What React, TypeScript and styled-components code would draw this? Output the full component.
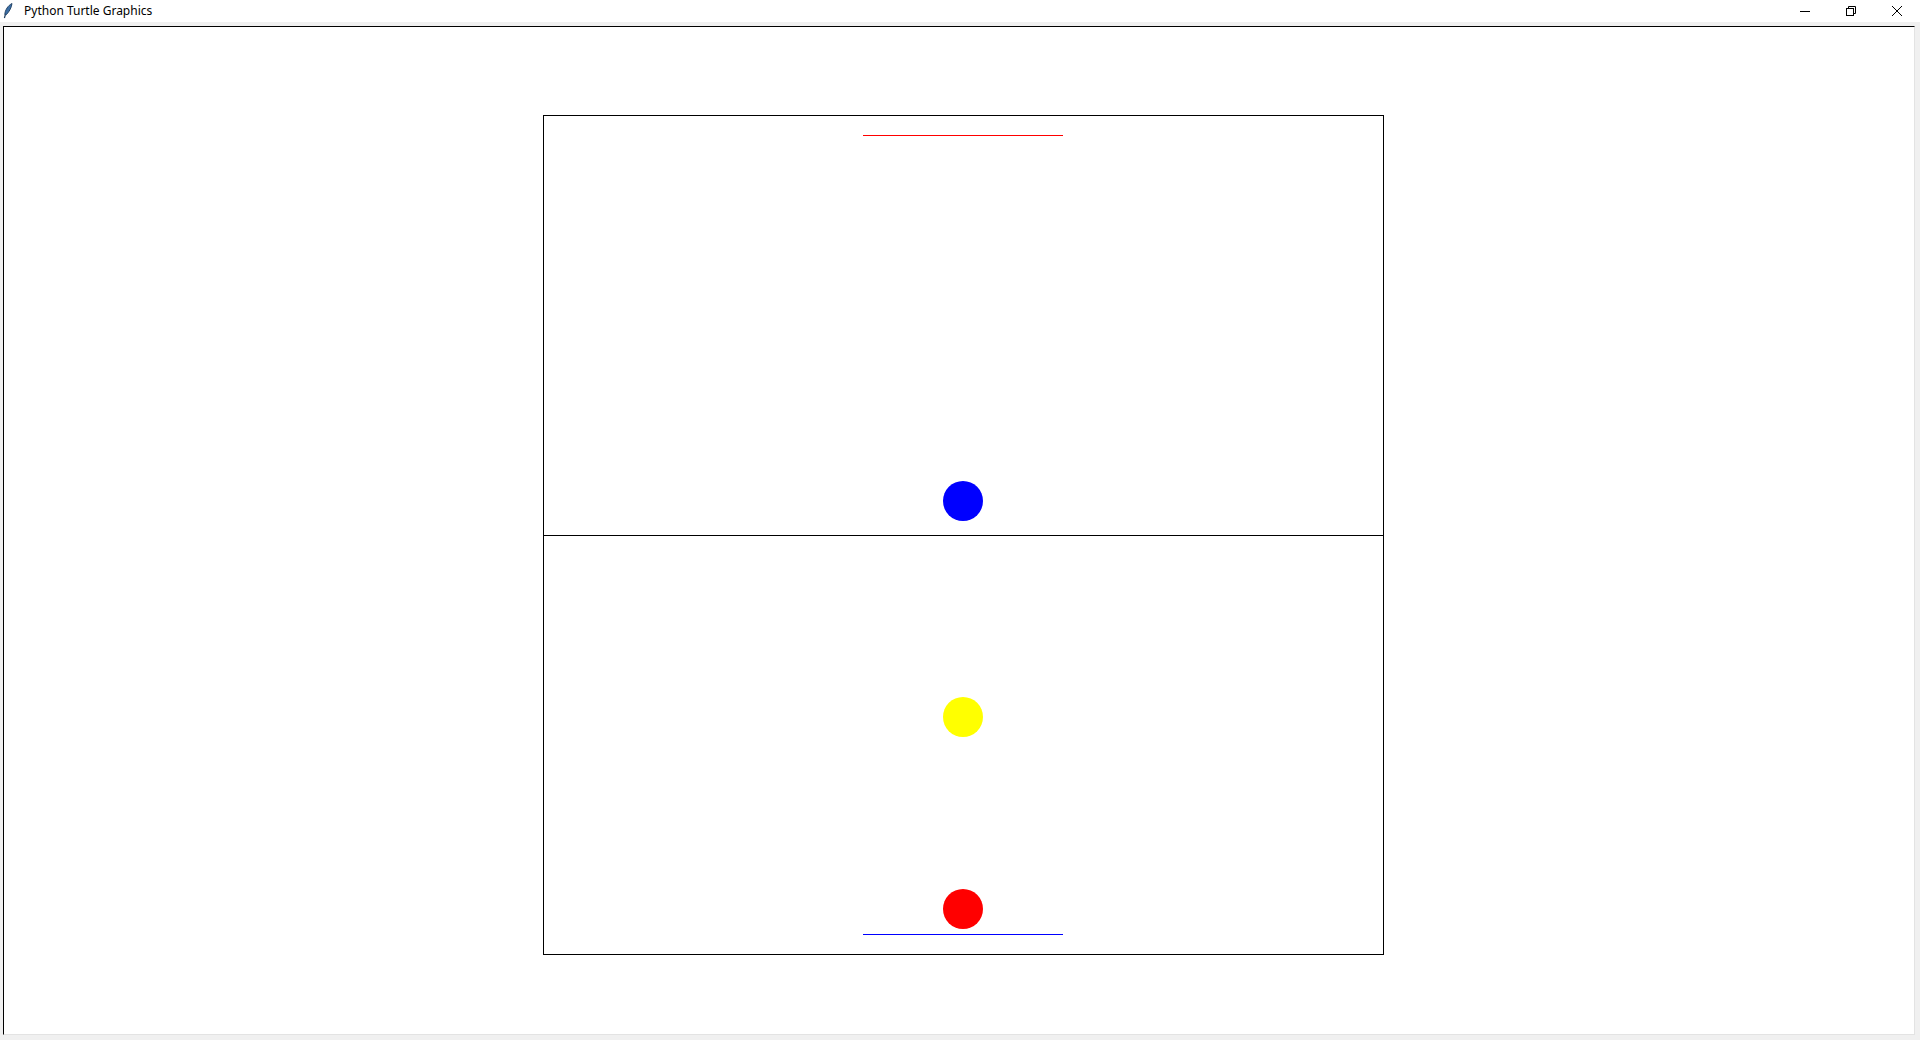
import styled, { createGlobalStyle } from 'styled-components';

const GlobalStyle = createGlobalStyle`
  html, body {
    margin: 0;
    padding: 0;
    overflow: hidden;
  }
`;

const FeatherIcon = () => (
  <svg width='10' height='16' viewBox='0 0 10 16'>
    <path d='M9 0.5 C5 2.5 2 7 1.8 11.5 L3.2 11.8 C6 9 8.5 5 9 0.5 Z' fill='#3b6ea5' stroke='#1c3b5e' strokeWidth='0.9' />
    <path d='M2.4 11.5 L1.4 15' stroke='#1c3b5e' strokeWidth='1.2' />
  </svg>
);

const MinimizeIcon = () => (
  <svg width='10' height='10' viewBox='0 0 10 10'>
    <path d='M0 5.5 H10' stroke='#000' strokeWidth='1' />
  </svg>
);

const RestoreIcon = () => (
  <svg width='10' height='10' viewBox='0 0 10 10'>
    <rect x='0.5' y='2.5' width='7' height='7' fill='none' stroke='#000' strokeWidth='1' />
    <path d='M2.5 2.5 V0.5 H9.5 V7.5 H7.5' fill='none' stroke='#000' strokeWidth='1' />
  </svg>
);

const CloseIcon = () => (
  <svg width='10' height='10' viewBox='0 0 10 10'>
    <path d='M0 0 L10 10 M10 0 L0 10' stroke='#000' strokeWidth='1' />
  </svg>
);

type BallProps = { $color: string };
type GoalProps = { $color: string };

const App = () => {
  return (
    <Window>
      <GlobalStyle />
      <TitleBar>
        <TitleLeft>
          <FeatherIcon />
          <Title>Python Turtle Graphics</Title>
        </TitleLeft>
        <Controls>
          <ControlButton>
            <MinimizeIcon />
          </ControlButton>
          <ControlButton>
            <RestoreIcon />
          </ControlButton>
          <ControlButton>
            <CloseIcon />
          </ControlButton>
        </Controls>
      </TitleBar>
      <Frame>
        <Canvas>
          <Field>
            <Half>
              <Goal $color='#ff0000' />
              <Spacer />
              <Ball $color='#0000ff' />
            </Half>
            <BottomHalf>
              <Ball $color='#ffff00' />
              <BottomGroup>
                <Ball $color='#ff0000' />
                <Goal $color='#0000ff' />
              </BottomGroup>
            </BottomHalf>
          </Field>
        </Canvas>
      </Frame>
    </Window>
  );
};

const Window = styled.div`
  display: flex;
  flex-direction: column;
  width: 1920px;
  height: 1040px;
  background-color: #f0f0f0;
  font-family: 'Noto Sans', 'Liberation Sans', sans-serif;
`;

const TitleBar = styled.div`
  display: flex;
  justify-content: space-between;
  align-items: center;
  height: 22px;
  background-color: #ffffff;
`;

const TitleLeft = styled.div`
  display: flex;
  align-items: center;
  gap: 11px;
  padding-left: 3px;
  height: 100%;
`;

const Title = styled.span`
  font-size: 12px;
  color: #000;
  line-height: 1;
`;

const Controls = styled.div`
  display: flex;
  height: 100%;
`;

const ControlButton = styled.div`
  display: flex;
  justify-content: center;
  align-items: center;
  width: 46px;
  height: 100%;
`;

const Frame = styled.div`
  display: flex;
  flex: 1;
  padding: 4px 5px 5px 3px;
  min-height: 0;
`;

const Canvas = styled.div`
  flex: 1;
  display: flex;
  align-items: flex-start;
  padding: 88px 0 0 539px;
  background-color: #ffffff;
  border-top: 1px solid #000;
  border-left: 1px solid #000;
  border-right: 1px solid #e3e3e3;
  border-bottom: 1px solid #e3e3e3;
`;

const Field = styled.div`
  display: flex;
  flex-direction: column;
  width: 841px;
  height: 840px;
  border: 1px solid #000;
  box-sizing: border-box;
`;

const Half = styled.div`
  display: flex;
  flex-direction: column;
  align-items: center;
  height: 419px;
  padding: 19px 1px 14px 0;
  box-sizing: border-box;
`;

const BottomHalf = styled.div`
  display: flex;
  flex-direction: column;
  align-items: center;
  flex: 1;
  border-top: 1px solid #000;
  padding: 161px 1px 19px 0;
  box-sizing: border-box;
  justify-content: space-between;
`;

const BottomGroup = styled.div`
  display: flex;
  flex-direction: column;
  align-items: center;
  gap: 5px;
`;

const Spacer = styled.div`
  flex: 1;
`;

const Goal = styled.div<GoalProps>`
  width: 200px;
  height: 1px;
  background-color: ${({ $color }) => $color};
`;

const Ball = styled.div<BallProps>`
  width: 40px;
  height: 40px;
  border-radius: 50%;
  background-color: ${({ $color }) => $color};
`;

export default App;
